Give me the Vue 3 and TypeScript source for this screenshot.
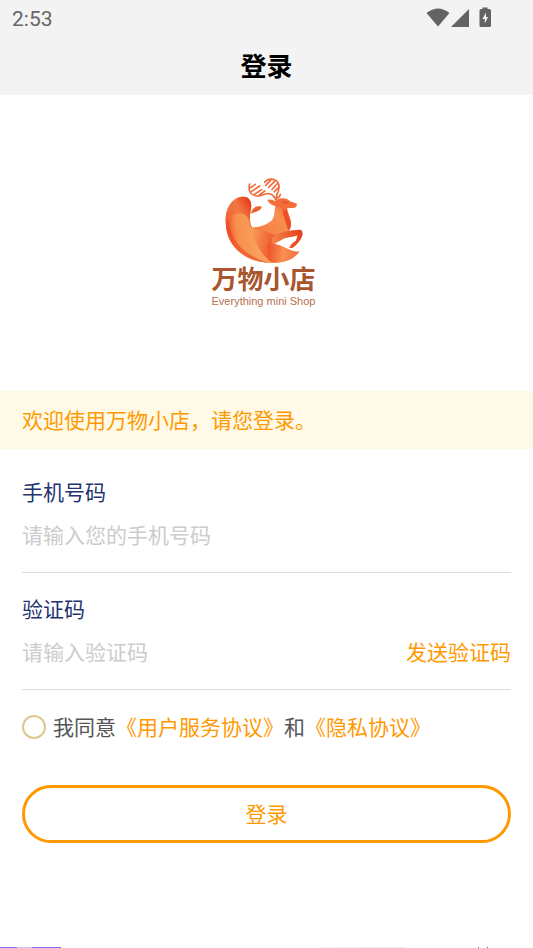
<script setup lang="ts">
import { ref } from 'vue'

const phone = ref<string>('')
const code = ref<string>('')
const agreed = ref<boolean>(false)
</script>

<template>
  <div class="page">
    <header class="top">
      <div class="status">
        <span class="clock">2:53</span>
        <svg class="status-icons" viewBox="0 0 68 24" aria-hidden="true">
          <path d="M0.500 7 Q12 -2 23.500 7 L12 20.500 Z" />
          <path d="M43 3 V21 H25 Z" />
          <path d="M56.500 3 V1.500 H61.500 V3 H63.500 Q65 3 65 4.500 V19.500 Q65 21 63.500 21 H55 Q53.500 21 53.500 19.500 V4.500 Q53.500 3 55 3 Z" />
          <path class="bolt" d="M60 6.500 L56.500 13 H58.800 V17.500 L62 11 H60 Z" />
        </svg>
      </div>
      <h1 class="title">登录</h1>
    </header>

    <main class="content">
      <div class="brand">
        <svg class="deer" viewBox="8 0 258 276" aria-hidden="true">
          <defs>
            <linearGradient id="base" gradientUnits="userSpaceOnUse" x1="60" y1="240" x2="220" y2="90">
              <stop offset="0" stop-color="#f0592c" />
              <stop offset="0.450" stop-color="#f58144" />
              <stop offset="0.750" stop-color="#f88f4e" />
              <stop offset="1" stop-color="#f26a38" />
            </linearGradient>
            <linearGradient id="lobe" gradientUnits="userSpaceOnUse" x1="30" y1="130" x2="100" y2="90">
              <stop offset="0" stop-color="#f0683a" />
              <stop offset="0.500" stop-color="#f37840" />
              <stop offset="1" stop-color="#e63c1c" />
            </linearGradient>
            <linearGradient id="leaf" gradientUnits="userSpaceOnUse" x1="25" y1="160" x2="110" y2="150">
              <stop offset="0" stop-color="#ee542b" />
              <stop offset="0.350" stop-color="#f88f4f" />
              <stop offset="1" stop-color="#f9a05c" />
            </linearGradient>
            <linearGradient id="flank" gradientUnits="userSpaceOnUse" x1="100" y1="180" x2="185" y2="200">
              <stop offset="0" stop-color="#f99b57" />
              <stop offset="1" stop-color="#ea4824" />
            </linearGradient>
            <linearGradient id="tail" gradientUnits="userSpaceOnUse" x1="150" y1="230" x2="240" y2="240">
              <stop offset="0" stop-color="#ee552c" />
              <stop offset="0.500" stop-color="#f98f50" />
              <stop offset="1" stop-color="#f37040" />
            </linearGradient>
            <linearGradient id="leg" gradientUnits="userSpaceOnUse" x1="165" y1="190" x2="250" y2="180">
              <stop offset="0" stop-color="#f58146" />
              <stop offset="1" stop-color="#e63f20" />
            </linearGradient>
          </defs>
          <path fill="url(#base)" d="M75 68 C92 68 102 82 98 104 C94 125 92 142 101 161 C130 158 160 148 166 128 C171 110 168 96 174 88 L206 92 C204 112 218 130 218 150 C218 160 214 166 210 171 L242 167 Q254 166 252 182 Q248 202 222 222 L213 222 Q216 212 226 205 L233 200 L238 184 C220 190 200 190 190 197 C180 202 174 206 168 209 C195 215 220 236 243 233 C225 258 190 268 150 266 C70 262 22 208 22 140 C22 98 45 68 75 68 Z" />
          <path fill="url(#lobe)" d="M75 68 C92 68 102 82 98 104 C94 125 92 142 101 161 C80 190 30 180 22 140 C22 98 45 68 75 68 Z" />
          <path fill="url(#flank)" d="M93 144 C94 158 97 161 101 161 C132 174 166 174 175 191 C178 200 171 205 158 207 C151 228 159 250 174 264 C117 260 80 200 93 144 Z" />
          <path fill="url(#leaf)" d="M24 163 C27 133 43 118 65 118 C88 119 92 137 96 160 C106 200 124 239 161 266 C83 268 31 220 24 163 Z" />
          <path fill="#ec4c26" opacity="0.650" d="M22 140 C21 208 72 262 153 266 C75 246 36 198 32 137 Q26 141 22 140 Z" />
          <path fill="url(#tail)" d="M149 207 C190 207 218 238 243 233 C225 257 199 267 165 266 C151 250 145 226 149 207 Z" />
          <path fill="url(#leg)" d="M163 190 C184 170 214 171 242 167 Q254 166 252 182 Q248 202 222 222 L213 222 Q216 212 226 205 L233 200 L238 184 C218 190 200 190 190 197 Q177 205 164 208 Q157 199 163 190 Z" />
          <path fill="#ed5029" d="M192 101 C193 125 203 142 210 171 Q219 162 218 146 C216 127 204 118 206 98 Z" />
          <path fill="#f36d39" d="M170 95 C160 94 151 86 147 77 Q159 74 171 82 Q180 71 197 73 Q210 75 215 82 L236 89 Q237 97 230 101 L207 103 L201 111 Q184 98 170 95 Z" />
          <path fill="none" stroke="#d7431f" stroke-width="3" stroke-linecap="round" d="M194 83 Q201 89 208 86" />
          <path fill="#f0602f" d="M98 119 C101 101 113 94 130 98 C128 110 117 111 98 119 Z" />
          <g class="antlers">
            <path d="M94 30 C88 52 99 65 116 66 C134 67 143 53 156 60 C166 65 170 69 172 78" />
            <path d="M97 41 L111 31 M100 52 L124 36 M108 61 L130 47 M122 64 L139 51" />
            <path d="M139 25 C145 16 158 12 171 19 C187 28 183 49 175 63 L174 77" />
            <path d="M142 34 L157 19 M151 40 L168 23 M161 46 L176 30 M168 53 L181 40 M175 72 Q184 71 186 61" />
          </g>
        </svg>
        <div class="brand-name">万物小店</div>
        <div class="brand-sub">Everything mini Shop</div>
      </div>

      <p class="notice">欢迎使用万物小店，请您登录。</p>

      <form class="form" @submit.prevent>
        <div class="field">
          <label class="label" for="phone">手机号码</label>
          <input id="phone" v-model="phone" class="input" type="tel" placeholder="请输入您的手机号码" />
        </div>
        <div class="field">
          <label class="label" for="code">验证码</label>
          <div class="row">
            <input id="code" v-model="code" class="input" type="text" inputmode="numeric" placeholder="请输入验证码" />
            <button class="send" type="button">发送验证码</button>
          </div>
        </div>
        <div class="agree">
          <input id="agree" v-model="agreed" class="check" type="checkbox" />
          <div>
            <label for="agree">我同意</label><a href="#terms">《用户服务协议》</a>和<a href="#privacy">《隐私协议》</a>
          </div>
        </div>
        <button class="submit" type="submit">登录</button>
      </form>
    </main>

    <div class="peek" aria-hidden="true">
      <span class="peek-violet"></span>
      <span class="peek-pale"></span>
      <span class="peek-dots"></span>
    </div>
  </div>
</template>

<style>
body {
  background: #fff;
}
</style>

<style scoped>
.page {
  display: flex;
  flex-direction: column;
  min-height: 100vh;
  font-family: "Noto Sans CJK SC", sans-serif;
  font-size: 21px;
  line-height: 28px;
  color: #555;
}
.top {
  background: #f3f3f3;
  padding-bottom: 10px;
}
.status {
  display: flex;
  justify-content: space-between;
  align-items: center;
  height: 36px;
  padding: 0 39px 0 12px;
}
.clock {
  padding-top: 2px;
  font-family: Roboto, sans-serif;
  font-size: 21px;
  font-weight: 400;
  color: #666;
}
.status-icons {
  width: 68px;
  height: 24px;
  fill: #636363;
}
.status-icons .bolt {
  fill: #f3f3f3;
}
.title {
  margin: 0;
  padding-top: 9px;
  font-size: 26px;
  line-height: 40px;
  font-weight: 700;
  color: #000;
  text-align: center;
}
.brand {
  display: flex;
  flex-direction: column;
  align-items: center;
  padding: 79px 6px 83px 0;
}
.deer {
  width: 86px;
  height: 92px;
}
.antlers {
  fill: none;
  stroke: #f16b3a;
  stroke-width: 5;
  stroke-linecap: round;
}
.brand-name {
  font-family: "Liberation Sans", "Noto Sans CJK SC", sans-serif;
  font-size: 26px;
  line-height: 28px;
  font-weight: 700;
  color: #a9562f;
}
.brand-sub {
  font-family: "Liberation Sans", sans-serif;
  font-size: 11px;
  line-height: 14px;
  color: #b5704f;
}
.notice {
  margin: 0;
  padding: 14px 22px 16px;
  background: #fff9e7;
  color: #ff9900;
}
.form {
  padding: 7px 22px 22px;
}
.field {
  display: flex;
  flex-direction: column;
  gap: 15px;
  padding: 21px 0 24px;
  border-bottom: 1px solid #ddd;
}
.label {
  color: #1f3370;
}
.row {
  display: flex;
}
.input {
  flex: 1;
  min-width: 0;
  width: 100%;
  height: 28px;
  padding: 0;
  border: 0;
  outline: 0;
  background: none;
  font: inherit;
  color: #333;
}
.input::placeholder {
  color: #ccc;
  opacity: 1;
}
.send {
  padding: 0;
  border: 0;
  background: none;
  font: inherit;
  color: #ff9900;
}
.agree {
  display: flex;
  align-items: flex-start;
  gap: 7px;
  padding: 22px 0 45px;
}
.agree a {
  color: #ff9900;
  text-decoration: none;
}
.check {
  appearance: none;
  flex: none;
  width: 24px;
  height: 24px;
  margin: 3px 0 0;
  border: 2px solid #dcc88e;
  border-radius: 50%;
}
.check:checked {
  background: #ff9900;
}
.submit {
  display: block;
  width: 100%;
  height: 58px;
  padding: 0 0 2px;
  border: 3px solid #ff9900;
  border-radius: 29px;
  background: #fff;
  font: inherit;
  color: #ff9900;
}
.peek {
  display: grid;
  grid-template-columns: 61fr 259fr 85fr 73fr 10fr 45fr;
  height: 1px;
  margin-top: auto;
}
.peek-violet {
  background: linear-gradient(90deg, #836cf0 28%, #cfc5fb 28%, #cfc5fb 53%, #836cf0 53%);
}
.peek-pale {
  grid-column: 3;
  background: linear-gradient(90deg, #f5f5f8, #e9e8f8);
}
.peek-dots {
  grid-column: 5;
  border: solid #666;
  border-width: 0 1px;
}
</style>
